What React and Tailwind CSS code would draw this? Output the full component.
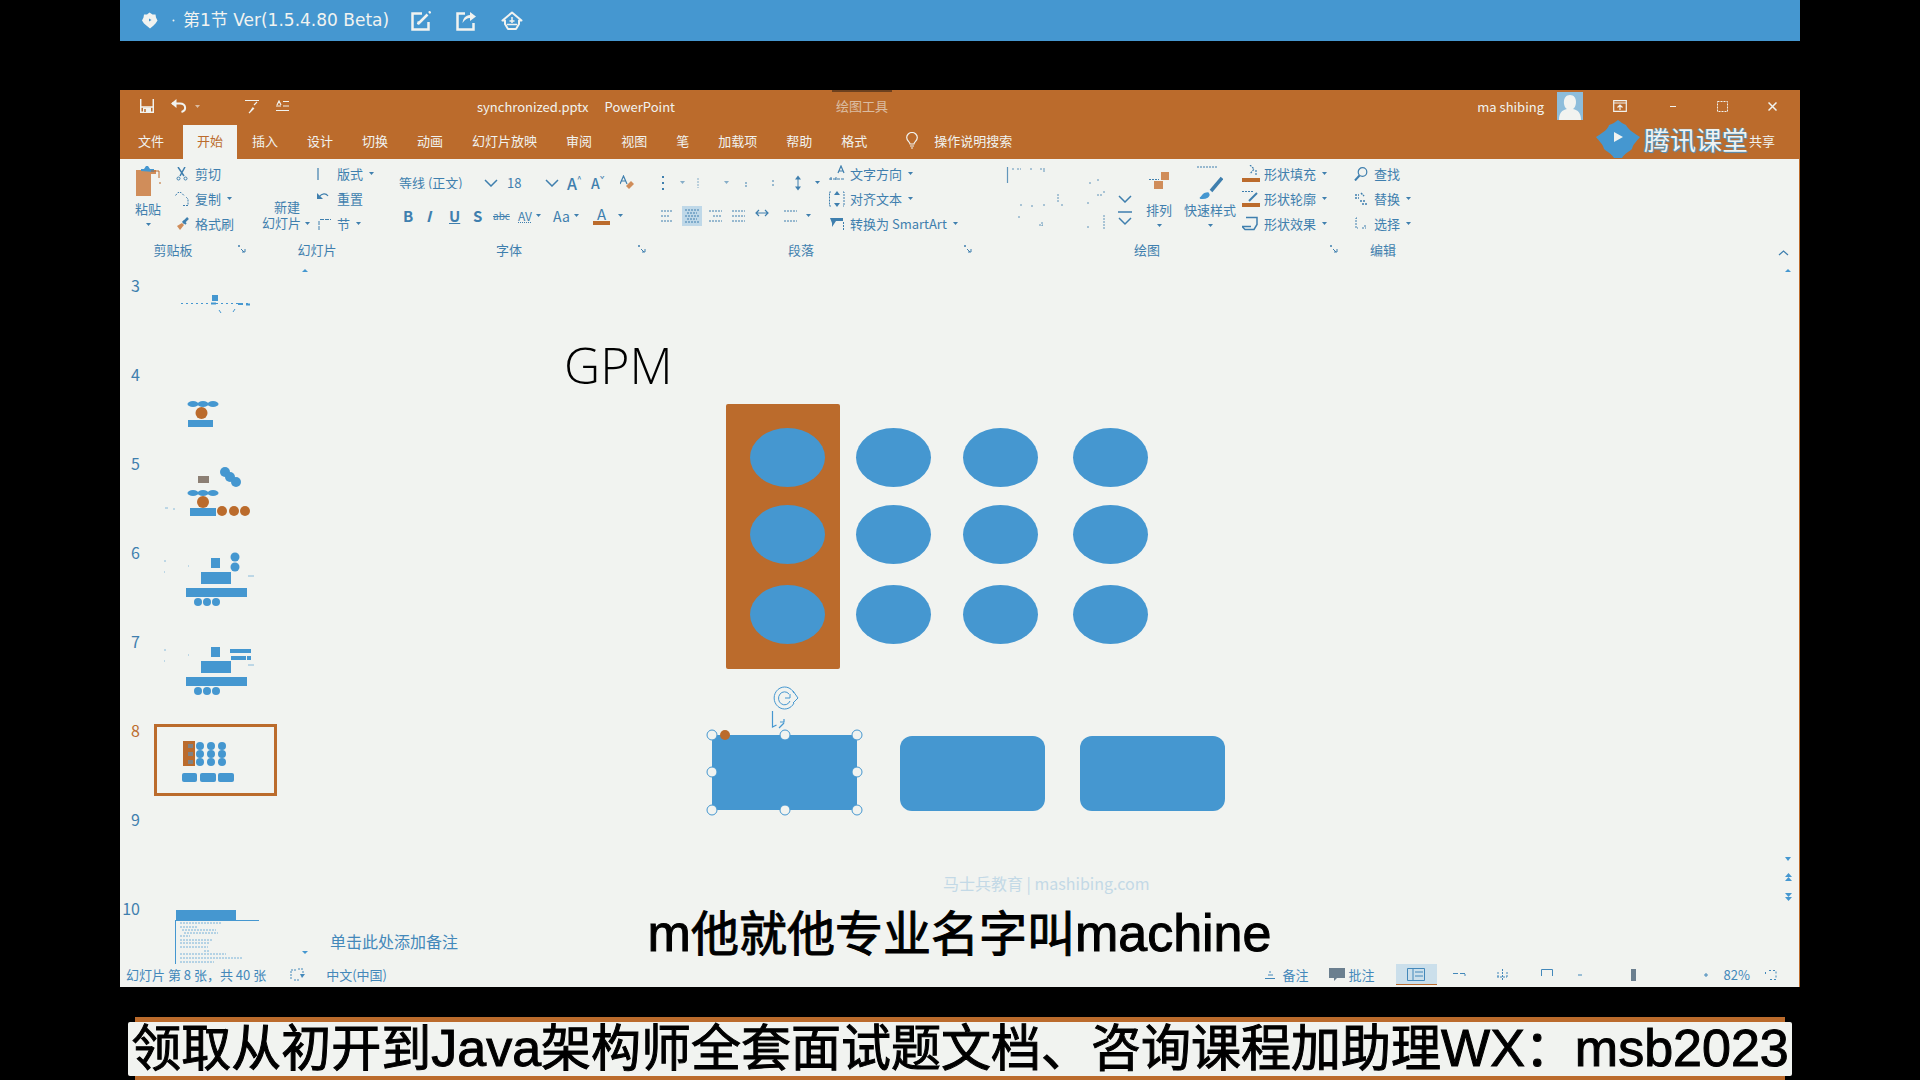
import React from "react";

const CJK = "font-['Noto_Sans_CJK_SC',sans-serif]";

function Ic({ w = 16, h = 16, className = "", children }) {
  return (
    <svg
      width={w}
      height={h}
      viewBox={`0 0 ${w} ${h}`}
      fill="none"
      stroke="currentColor"
      strokeWidth="1.5"
      className={`shrink-0 ${className}`}
      aria-hidden="true"
    >
      {children}
    </svg>
  );
}

const Arrow = ({ className = "" }) => (
  <Ic w={5} h={3} className={className}>
    <path d="M0 0h5L2.5 3z" fill="currentColor" stroke="none" />
  </Ic>
);

const Chevron = ({ className = "" }) => (
  <Ic w={14} h={8} className={className}>
    <path d="M1 1l6 6 6-6" />
  </Ic>
);

const Launcher = () => (
  <Ic w={8} h={8}>
    <path d="M0 1h2M1 0v2M3 4l3 3M7 4v3H4" strokeWidth="1" />
  </Ic>
);

function TopBar() {
  return (
    <header className="flex h-[41px] items-center bg-[#4597d0] pl-[21px] text-[#f1f3f0]">
      <Ic w={17} h={17}>
        <path
          d="M8.500 0.500l3 2h3l.5 3 1.500 3-2 3-2.500 2.500-3 2.500-3-2.500-3-2.500-2-3 1.500-3 .5-3h3z"
          fill="currentColor"
          stroke="none"
        />
        <path d="M8 6.500l2.500 1.500L8 9.500z" fill="#4597d0" stroke="none" />
      </Ic>
      <Ic w={3} h={3} className="mr-[8px] ml-[14px]">
        <circle cx="1.500" cy="1.500" r="1" fill="currentColor" stroke="none" />
      </Ic>
      <h1 className="font-['DejaVu_Sans','Noto_Sans_CJK_SC',sans-serif] text-[17px] leading-none">第1节 Ver(1.5.4.80 Beta)</h1>
      <div className="ml-[22px] flex items-center gap-[25px]">
        <button aria-label="编辑">
          <Ic w={20} h={20}>
            <path d="M11 2.500H1.500v16h16V11" strokeWidth="2.500" />
            <path d="M8 12l8.500-8.500M18 2l1.500-1.500M7 13.500l1-3" strokeWidth="2.500" />
          </Ic>
        </button>
        <button aria-label="分享">
          <Ic w={20} h={20}>
            <path d="M9 2.500H1.500v16h16V12" strokeWidth="2.500" />
            <path d="M6.500 12C7 7 9.500 4.500 14 4V1l6 4.500L14 10V7c-3 0-5 1.500-7.500 5z" fill="currentColor" stroke="none" />
          </Ic>
        </button>
        <button aria-label="主页">
          <Ic w={22} h={20}>
            <path d="M11 1.500L1.500 9.500H4v3.500l3 5h8l3-5V9.500h2.500z" strokeWidth="2" strokeLinejoin="round" />
            <path d="M11 6v6M8.500 10h5M6 13.500h10" strokeWidth="1.500" />
          </Ic>
        </button>
      </div>
    </header>
  );
}

function TitleBar() {
  return (
    <div className="flex h-[34px] items-center pb-[2px] pl-5 text-[13px] leading-none">
      <div className="flex items-center">
        <button aria-label="保存">
          <Ic w={14} h={14}>
            <path d="M.7 0v13.300h12.600V0M1 8h12" />
            <path d="M3 8.500h8V13H3z" fill="currentColor" stroke="none" />
            <path d="M5 10v3" stroke="#bb6b2c" />
          </Ic>
        </button>
        <button aria-label="撤消" className="ml-[17px]">
          <Ic w={16} h={14}>
            <path d="M1 4.500h8c6 0 7 7 1.500 8.500" strokeWidth="2" />
            <path d="M0 4.500L5.500 0v9z" fill="currentColor" stroke="none" />
          </Ic>
        </button>
        <Arrow className="ml-2 opacity-60" />
        <button aria-label="从头开始" className="ml-[45px]">
          <Ic w={14} h={15}>
            <path d="M0 1.500h14M9 6l3-3M4 14l5-5M8 8.500L5 13" strokeWidth="1.200" />
          </Ic>
        </button>
        <button aria-label="选项" className="ml-[17px]">
          <Ic w={13} h={13}>
            <path d="M0 6h5M1 5l2-4 2 4M7 1.500h6M7 6h6M0 10.500h13" strokeWidth="1.200" />
          </Ic>
        </button>
      </div>
      <p className="ml-[188px]">synchronized.pptx</p>
      <p className="ml-[16px]">PowerPoint</p>
      <p className="ml-[157px] self-stretch border-t-2 border-[#3a2415] px-1 pt-[7px] opacity-60">绘图工具</p>
      <div className="ml-auto flex items-center">
        <span>ma shibing</span>
        <Ic w={26} h={28} className="ml-[13px]">
          <path d="M0 0h26v28H0z" fill="#8dbddb" stroke="none" />
          <path d="M13 3c8 0 7 12 3 14 5 1 8 4 8 11H2c0-7 3-10 8-11C6 15 5 3 13 3z" fill="#f1f3f0" stroke="none" />
        </Ic>
        <button aria-label="功能区显示选项" className="ml-[30px]">
          <Ic w={14} h={12}>
            <path d="M.7.7h12.600v10.600H.7zM1 3h12M7 10V5M4.500 7.500L7 5l2.500 2.500" strokeWidth="1.200" />
          </Ic>
        </button>
        <button aria-label="最小化" className="ml-[43px]">
          <Ic w={6} h={12}>
            <path d="M0 6.500h6" strokeWidth="1" />
          </Ic>
        </button>
        <button aria-label="还原" className="ml-[41px]">
          <Ic w={11} h={11}>
            <path d="M.5.5h10v10H.5z" strokeWidth="1" strokeDasharray="2 1" />
          </Ic>
        </button>
        <button aria-label="关闭" className="mr-[22px] ml-[40px]">
          <Ic w={9} h={9}>
            <path d="M.5.5l8 8M8.500.5l-8 8" />
          </Ic>
        </button>
      </div>
    </div>
  );
}

const TABS = ["插入", "设计", "切换", "动画", "幻灯片放映", "审阅", "视图", "笔", "加载项", "帮助", "格式"];

function TabBar() {
  return (
    <nav className="relative flex h-[35px] items-stretch gap-px pl-1 text-[13px] leading-none">
      <button className="mr-[4px] px-[14px] pb-[3px]">文件</button>
      <button className="mt-px bg-[#f1f3f0] px-[14px] pb-[3px] text-[#bb6b2c]">开始</button>
      {TABS.map((t) => (
        <button key={t} className="px-[14px] pb-[3px]">
          {t}
        </button>
      ))}
      <button className="ml-[24px] flex items-center gap-4 pb-[3px]">
        <Ic w={12} h={17}>
          <path d="M4 12c0-2-3.300-3-3.300-6.500a5.300 5 0 0 1 10.600 0C11.300 9 8 10 8 12zM4 14h4M5 16h2" strokeWidth="1.200" />
        </Ic>
        操作说明搜索
      </button>
      <button className="mr-[24px] ml-auto pb-[3px]">共享</button>
      <div className="absolute -top-1 right-[51px] flex items-center gap-1">
        <Ic w={44} h={38}>
          <path
            d="M22 0c3 2 5 4 8 5 2 4 6 7 14 12-3 4-7 7-8 12-3 3-7 4-10 9h-8c-3-5-7-6-10-9-1-5-5-8-8-12C8 12 12 9 13 5c4-1 6-3 9-5z"
            fill="#4597d0"
            stroke="none"
          />
          <path d="M18 12l9 5-9 5z" fill="#f1f3f0" stroke="none" />
        </Ic>
        <span className="text-[26px] leading-none [text-shadow:1px_1px_1px_#4597d0,-1px_0_1px_#4597d0]">腾讯课堂</span>
      </div>
    </nav>
  );
}

function Group({ label, width, launcher, children }) {
  return (
    <section className={`flex shrink-0 flex-col ${width}`}>
      <div className="flex h-[80px] pt-0.5">{children}</div>
      <div className="flex h-[20px] items-center pr-1">
        <h2 className={`flex-1 text-center ${launcher ? "pr-3" : "pr-1"}`}>{label}</h2>
        {launcher && <Launcher />}
      </div>
    </section>
  );
}

function Row({ icon, text, arrow }) {
  return (
    <button className="flex h-[25px] items-center gap-[5px] whitespace-nowrap">
      <span className="flex w-4 justify-center">{icon}</span>
      {text}
      {arrow && <Arrow className="ml-px" />}
    </button>
  );
}

const Shape = ({ d, children }) => (
  <Ic w={18} h={18}>
    {d && <path d={d} />}
    {children}
  </Ic>
);

const Lines = ({ d = "M0 2h12M0 7h9M0 12h12", className = "" }) => (
  <Ic w={14} h={14} className={className}>
    <path d={d} strokeWidth="1" strokeDasharray="2 1" />
  </Ic>
);

function Ribbon() {
  return (
    <div className="flex h-[107px] overflow-hidden text-[13px] leading-none text-[#3f7fae]">
      <Group label="剪贴板" width="w-[130px]" launcher>
        <button className="ml-3 flex w-8 flex-col items-center pt-[5px]">
          <Ic w={26} h={32}>
            <path d="M1 4h20v4h-5v22H1z" fill="#d08d5a" stroke="none" />
            <path d="M6 5V3h3l2-3h2l2 3h4v3z" fill="#4597d0" stroke="none" />
            <path d="M16 5h8v7M24 17h3" strokeWidth="1" stroke="#bb6b2c" />
          </Ic>
          <span className="mt-1">粘贴</span>
          <Arrow className="mt-2" />
        </button>
        <div className="ml-[10px] flex flex-col">
          <Row
            text="剪切"
            icon={
              <Ic w={12} h={14}>
                <path d="M2 0l6 9M9 0L4 9" />
                <circle cx="2.500" cy="11.500" r="1.500" strokeWidth="1" />
                <circle cx="9.500" cy="11.500" r="1.500" strokeWidth="1" />
              </Ic>
            }
          />
          <Row
            text="复制"
            arrow
            icon={
              <Ic w={14} h={14}>
                <path d="M.5 3.500L3 .5h3l3 3M8 13.500h5V7l-2-2" strokeWidth="1" strokeDasharray="2 1" />
              </Ic>
            }
          />
          <Row
            text="格式刷"
            icon={
              <Ic w={13} h={13}>
                <path d="M12 1L7 6" strokeWidth="2.500" />
                <path d="M7 4l3 3" strokeWidth="2" />
                <path d="M6 6l-5 3 3 4 4-5z" fill="#d08d5a" stroke="none" />
              </Ic>
            }
          />
        </div>
      </Group>

      <Group label="幻灯片" width="w-[142px]">
        <button className="ml-3 flex w-[50px] flex-col items-start pt-[38px]">
          <span className="ml-3 leading-[16px]">新建</span>
          <span className="flex items-center gap-1 leading-[16px]">
            幻灯片 <Arrow />
          </span>
        </button>
        <div className="ml-1 flex flex-col">
          <Row
            text="版式"
            arrow
            icon={
              <Ic w={14} h={14}>
                <path d="M1 1v12" strokeWidth="1.200" />
              </Ic>
            }
          />
          <Row
            text="重置"
            icon={
              <Ic w={14} h={14}>
                <path d="M2 5c3-4 7-4 9-1" strokeWidth="1.200" />
                <path d="M0 1v6h6z" fill="currentColor" stroke="none" />
              </Ic>
            }
          />
          <Row
            text="节"
            arrow
            icon={
              <Ic w={14} h={14}>
                <path d="M2 13V4M3 2.500h11" strokeWidth="1" strokeDasharray="4 1" />
              </Ic>
            }
          />
        </div>
      </Group>

      <Group label="字体" width="w-[258px]" launcher>
        <div className="ml-[7px] flex flex-col pt-[5px]">
          <div className="flex h-[33px] items-center">
            <label className="relative flex items-center">
              <select aria-label="字体" className="w-[108px] appearance-none bg-transparent">
                <option>等线 (正文)</option>
              </select>
              <Chevron className="pointer-events-none absolute right-[9px]" />
            </label>
            <label className="relative flex items-center">
              <select aria-label="字号" className="w-[60px] appearance-none bg-transparent">
                <option>18</option>
              </select>
              <Chevron className="pointer-events-none absolute right-[8px]" />
            </label>
            <button className="flex w-[24px] items-start text-base leading-none font-medium">
              A<span className="text-[8px]">^</span>
            </button>
            <button className="flex w-[29px] items-start text-sm leading-none font-medium">
              A<span className="text-[8px]">ˇ</span>
            </button>
            <button className="flex items-center" aria-label="清除格式">
              <Ic w={14} h={16}>
                <path d="M0 9l3.500-8L7 9M1.500 6H6" strokeWidth="1.200" />
                <path d="M6 11l5-5 3 3-5 5z" fill="#d08d5a" stroke="none" />
              </Ic>
            </button>
          </div>
          <div className="flex h-[33px] items-center text-[15px] leading-none">
            <button className="w-[23px] pl-1 text-left font-bold">B</button>
            <button className="w-[23px] pl-1 text-left font-bold italic">I</button>
            <button className="w-[24px] pl-1 text-left font-bold underline">U</button>
            <button className="w-[24px] pl-1 text-left font-bold">S</button>
            <button className="w-[25px] text-left text-[10px] line-through">abc</button>
            <button className="w-[35px] text-left">
              <span className="flex items-center gap-1 text-[12px] underline decoration-dotted">
                AV <Arrow />
              </span>
            </button>
            <button className="flex w-[40px] items-center gap-1 text-[14px]">
              Aa <Arrow />
            </button>
            <button className="flex items-center gap-2">
              <span className="w-[17px] border-b-4 border-[#bb6b2c] text-center">A</span>
              <Arrow />
            </button>
          </div>
        </div>
      </Group>

      <Group label="段落" width="w-[326px]" launcher>
        <div className="ml-[11px] flex w-[167px] flex-col pt-[5px]">
          <div className="flex h-[33px] items-center justify-between pr-[8px]">
            <Ic w={6} h={16}>
              <path d="M1 2h2M1 8h2M1 14h2" strokeWidth="2" />
            </Ic>
            <Arrow className="opacity-60" />
            <Lines d="M1 2v10" className="opacity-60" />
            <Arrow className="opacity-60" />
            <Lines d="M4 7h3M4 10h2" />
            <Lines d="M4 5h3M4 9h3" />
            <Ic w={8} h={16}>
              <path d="M4 2v12" strokeWidth="1" />
              <path d="M1 4.500L4 .5l3 4zM1 11.500l3 4 3-4z" fill="currentColor" stroke="none" />
            </Ic>
            <Arrow />
          </div>
          <div className="flex h-[33px] items-center">
            <button aria-label="左对齐"><Lines /></button>
            <button aria-label="居中" className="ml-[7px] bg-[#bfd8e8] p-[3px]"><Lines d="M0 1h14M2 4h10M0 7h14M2 10h10M0 13h14" /></button>
            <button aria-label="右对齐" className="ml-[7px]"><Lines d="M0 2h13M4 7h9M0 12h13" /></button>
            <button aria-label="两端对齐" className="ml-[9px]"><Lines d="M0 2h13M0 7h13M0 12h13" /></button>
            <button aria-label="分散对齐" className="ml-[9px]">
              <Ic w={14} h={14}>
                <path d="M1 4h12M4 1L1 4l3 3M10 1l3 3-3 3" strokeWidth="1.200" />
              </Ic>
            </button>
            <button aria-label="分栏" className="ml-[15px] flex items-center gap-2">
              <Lines d="M0 2h13M0 12h13" />
              <Arrow />
            </button>
          </div>
        </div>
        <div className="flex flex-col pl-[1px]">
          <Row
            text="文字方向"
            arrow
            icon={
              <Ic w={16} h={18}>
                <path d="M9 8l3-7 3 7M10 6h4" strokeWidth="1.200" />
                <path d="M0 14h15M2 12v4M7 12v4" strokeWidth="1" strokeDasharray="3 1" />
              </Ic>
            }
          />
          <Row
            text="对齐文本"
            arrow
            icon={
              <Ic w={16} h={16}>
                <path d="M2 1H.5v14H2M14 1h1v14h-1" strokeWidth="1" strokeDasharray="2 1" />
                <path d="M5 4l3-4 3 4zM5 12l3 4 3-4z" fill="currentColor" stroke="none" />
              </Ic>
            }
          />
          <Row
            text="转换为 SmartArt"
            arrow
            icon={
              <Ic w={16} h={14}>
                <path d="M1 1h13v3H7l-4 6V6z" fill="currentColor" stroke="none" />
                <path d="M14.500 5v8" strokeWidth="1" strokeDasharray="2 1" />
              </Ic>
            }
          />
        </div>
      </Group>

      <Group label="绘图" width="w-[366px]" launcher>
        <Ic w={106} h={70} className="ml-[29px] opacity-80">
          <path d="M2.500 6v16" strokeWidth="1.200" />
          <path
            d="M7 8h3M12 8h4M25 8h2M35 8h5M38 10h3M84 22h3M92 19h2M53 33v9M56 44h3M15 44h2M26 45h2M38 44h2M13 56h2M34 64h4M37 61v4M82 42h3M92 34h6M99 30v3M99 54v14M82 66h2"
            strokeWidth="1"
            strokeDasharray="2 1"
          />
        </Ic>
        <div className="ml-[6px] flex w-[16px] flex-col items-center gap-[7px] pt-[34px]">
          <button aria-label="向下滚动"><Chevron className="block" /></button>
          <button aria-label="其他形状">
            <Ic w={14} h={16} className="block">
              <path d="M0 2h14M1 8l6 6 6-6" />
            </Ic>
          </button>
        </div>
        <button className="ml-[12px] flex w-[28px] flex-col items-center pt-[11px]">
          <Ic w={20} h={18}>
            <path d="M12 0h8v8h-8zM5 9h9v8H5z" fill="#d08d5a" stroke="none" />
            <path d="M0 7.500h10" strokeWidth="1" strokeDasharray="2 1" />
          </Ic>
          <span className="mt-[13px]">排列</span>
          <Arrow className="mt-2" />
        </button>
        <button className="ml-[10px] flex w-[54px] flex-col items-center pt-[5px]">
          <Ic w={26} h={33}>
            <path d="M0 1h20" strokeWidth="1" strokeDasharray="2 1" />
            <path d="M25 12L14 25" strokeWidth="3.500" />
            <path d="M3 32c3-1 2-5 8-5 3 3-2 6-8 5z" fill="#4597d0" stroke="#4597d0" />
          </Ic>
          <span className="mt-1">快速样式</span>
          <Arrow className="mt-2" />
        </button>
        <div className="ml-[6px] flex flex-col">
          <Row
            text="形状填充"
            arrow
            icon={
              <Shape>
                <path d="M8 0l4 4-4 5M14 5v5" strokeWidth="1.200" strokeDasharray="2 1" />
                <path d="M0 13h18v4H0z" fill="#bb6b2c" stroke="none" />
              </Shape>
            }
          />
          <Row
            text="形状轮廓"
            arrow
            icon={
              <Shape>
                <path d="M0 1.500h12" strokeWidth="1" strokeDasharray="2 1" />
                <path d="M15 3L7 11" strokeWidth="2" />
                <path d="M0 13h18v4H0z" fill="#bb6b2c" stroke="none" />
              </Shape>
            }
          />
          <Row text="形状效果" arrow icon={<Shape d="M4 2.500h11v7l-3 5H3l-3-3h9" />} />
        </div>
      </Group>

      <Group label="编辑" width="w-[90px]">
        <div className="ml-[11px] flex flex-col">
          <Row
            text="查找"
            icon={
              <Ic w={14} h={14}>
                <circle cx="8.500" cy="5" r="4.300" strokeWidth="1.200" />
                <path d="M5.500 8.500L1 13.500" strokeWidth="2" />
              </Ic>
            }
          />
          <Row
            text="替换"
            arrow
            icon={
              <Ic w={14} h={14}>
                <path d="M1 3h4M1 6h4M7 1l3 3M6 9h6M8 12h6" strokeWidth="1.500" strokeDasharray="2 1" />
              </Ic>
            }
          />
          <Row
            text="选择"
            arrow
            icon={
              <Ic w={14} h={14}>
                <path d="M3 1H2v10h2M8 11h4M11 8v3" strokeWidth="1" strokeDasharray="2 1" />
              </Ic>
            }
          />
        </div>
      </Group>
      <button aria-label="折叠功能区" className="mr-[10px] mb-[10px] ml-auto self-end">
        <Ic w={11} h={6}>
          <path d="M1 5l4.500-4L10 5" strokeWidth="1.200" />
        </Ic>
      </button>
    </div>
  );
}

const B = "#4597d0";
const O = "#bb6b2c";

function Dots({ pts, r = 4, fill = B }) {
  return pts.map(([x, y]) => <circle key={`${x}-${y}`} cx={x} cy={y} r={r} fill={fill} />);
}

function Flow() {
  return (
    <>
      <path d="M47 26h30v12H47zM32 42h61v9H32zM57 12h9v10h-9z" fill={B} />
      <Dots pts={[[44, 56], [53, 56], [62, 56]]} />
      <path d="M10 15h2M10 26h1M34 20h1M94 30h6" stroke={B} opacity=".6" />
    </>
  );
}

function Trio() {
  return (
    <>
      <ellipse cx="39" cy="36" rx="5.500" ry="3" fill={B} />
      <ellipse cx="49" cy="36" rx="5.500" ry="3" fill={B} />
      <ellipse cx="59" cy="36" rx="5.500" ry="3" fill={B} />
    </>
  );
}

const THUMBS = {
  3: (
    <>
      <path d="M58 16h6v6h-6z" fill={B} />
      <path d="M27 24.500h69" stroke={B} strokeDasharray="2 3" />
      <path d="M57 24.500h5M84 25h5M92 25.500h4" stroke={B} strokeWidth="2" />
      <path d="M65 31l2 3M79 33l2-3" stroke={B} />
    </>
  ),
  4: (
    <>
      <Trio />
      <path d="M34 52h25v7H34z" fill={B} />
      <circle cx="47.500" cy="45" r="6" fill={O} />
    </>
  ),
  5: (
    <>
      <Dots r={5} pts={[[71, 15], [76, 20], [82, 25]]} />
      <path d="M44 19h11v7H44z" fill="#8c7f74" />
      <Trio />
      <path d="M36 51h26v8H36z" fill={B} />
      <circle cx="49" cy="45" r="6" fill={O} />
      <Dots r={5} fill={O} pts={[[68, 54], [80, 54], [91, 54]]} />
      <path d="M11 51h3M19 52h2" stroke={B} opacity=".6" />
    </>
  ),
  6: (
    <>
      <Flow />
      <Dots r={4.5} pts={[[81, 11], [81, 21]]} />
    </>
  ),
  7: (
    <>
      <Flow />
      <path d="M76 14h21v4H76zM77 21h15v4H77zM93 21h4v4h-4z" fill={B} />
    </>
  ),
  8: (
    <>
      <path d="M29 17h12v25H29z" fill={O} />
      <path d="M34 20h5v4h-5zM34 28h5v4h-5zM34 36h5v4h-5z" fill="#7f8285" />
      <Dots pts={[[46, 22], [57, 22], [68, 22], [46, 30], [57, 30], [68, 30], [46, 38], [57, 38], [68, 38]]} />
      <rect x="28" y="49" width="15" height="9" rx="2" fill={B} />
      <rect x="46" y="49" width="16" height="9" rx="2" fill={B} />
      <rect x="64" y="49" width="16" height="9" rx="2" fill={B} />
    </>
  ),
  9: null,
  10: (
    <>
      <path d="M22 8h60v10H22z" fill={B} />
      <path d="M22 18.500h83M21.500 18v46" stroke={B} />
      <path
        d="M26 21h41M26 25h18M28 28h34M30 31h34M26 34h10M26 38h32M26 41h30M26 45h28M50 49h6M26 52h46M26 56h62M26 60h34"
        stroke={B}
        strokeDasharray="2 1"
        opacity=".7"
      />
    </>
  ),
};

function SlidePanel() {
  return (
    <aside className="relative w-[190px] shrink-0 overflow-hidden">
      <ol className="absolute inset-x-0 top-[13px]">
        {Object.keys(THUMBS).map((n) => (
          <li key={n} className="flex h-[89px] items-start">
            <span
              className={`flex w-[20px] justify-end text-base leading-[12px] whitespace-nowrap ${n === "8" ? "text-[#bb6b2c]" : "text-[#3f7fae]"}`}
            >
              {n}
            </span>
            <button
              aria-label={`幻灯片 ${n}`}
              className={`ml-[14px] h-[72px] w-[123px] ${n === "8" ? "outline-3 -outline-offset-3 outline-[#bb6b2c]" : ""}`}
            >
              <svg width="123" height="72" viewBox="0 0 123 72" fill="none" aria-hidden="true">
                {THUMBS[n]}
              </svg>
            </button>
          </li>
        ))}
      </ol>
      <Ic w={6} h={3} className="absolute top-[3px] right-[2px] text-[#4597d0]">
        <path d="M3 0l3 3H0z" fill="currentColor" stroke="none" />
      </Ic>
      <Ic w={6} h={3} className="absolute right-[2px] bottom-[10px] text-[#4597d0]">
        <path d="M3 3l3-3H0z" fill="currentColor" stroke="none" />
      </Ic>
    </aside>
  );
}

const COLS = [440, 546, 653, 763];
const ROWS = [162, 239, 319];
const HANDLES = [
  [402, 469], [475, 469], [547, 469],
  [402, 506], [547, 506],
  [402, 544], [475, 544], [547, 544],
];

function Slide() {
  return (
    <main className="relative min-h-0 flex-1">
      <h2 className="absolute top-[69px] left-[254px] font-['Open_Sans','Noto_Sans',sans-serif] text-[50px] leading-[60px] font-light text-black">
        GPM
      </h2>
      <div className="absolute top-[138px] left-[416px] h-[265px] w-[114px] rounded-xs bg-[#bb6b2c]" />
      {ROWS.map((y) =>
        COLS.map((x) => (
          <div
            key={`${x}-${y}`}
            className="absolute h-[59px] w-[75px] rounded-[50%] bg-[#4597d0]"
            style={{ left: x, top: y }}
          />
        )),
      )}
      <div className="absolute top-[469px] left-[402px] h-[75px] w-[145px] rounded-md bg-[#4597d0]" />
      <div className="absolute top-[470px] left-[590px] h-[75px] w-[145px] rounded-xl bg-[#4597d0]" />
      <div className="absolute top-[470px] left-[770px] h-[75px] w-[145px] rounded-xl bg-[#4597d0]" />
      {HANDLES.map(([x, y]) => (
        <span
          key={`${x}-${y}`}
          className="absolute size-[11px] -translate-1/2 rounded-full border border-[#4597d0] bg-[#f1f3f0]"
          style={{ left: x, top: y }}
        />
      ))}
      <span className="absolute top-[464px] left-[410px] size-[10px] rounded-full bg-[#bb6b2c]" />
      <Ic w={26} h={24} className="absolute top-[420px] left-[463px] text-[#4597d0]">
        <path d="M21 7A10.500 11 0 1 0 21 17M20 5l5 7-5 5" strokeWidth="1" />
        <path d="M16 8a6 6.500 0 1 0 1 7M12 12h5V8" strokeWidth="1" />
      </Ic>
      <Ic w={16} h={20} className="absolute top-[445px] left-[461px] text-[#4597d0]">
        <path d="M1.500 0v16l4-2M9 11h4V8M8 17l5-5" strokeWidth="1.200" />
      </Ic>
      <p className="absolute top-[609px] left-[633px] text-base leading-none whitespace-nowrap text-[#c3d9e6]">
        马士兵教育 | mashibing.com
      </p>
      <div className="absolute top-[3px] right-[7px] bottom-0 flex w-[8px] flex-col items-center text-[#4597d0]">
        <Ic w={6} h={3}>
          <path d="M3 0l3 3H0z" fill="currentColor" stroke="none" />
        </Ic>
        <Ic w={6} h={4} className="mt-auto">
          <path d="M3 4L0 0h6z" fill="currentColor" stroke="none" />
        </Ic>
        <Ic w={7} h={9} className="mt-[12px]">
          <path d="M3.500 0L7 4H0zM3.500 4L7 8H0z" fill="currentColor" stroke="none" />
        </Ic>
        <Ic w={7} h={9} className="mt-[10px] mb-[10px]">
          <path d="M3.500 5L0 1h7zM3.500 9L0 5h7z" fill="currentColor" stroke="none" />
        </Ic>
      </div>
    </main>
  );
}

function StatusBar() {
  return (
    <footer className="flex h-[23px] items-center pb-[2px] pl-[6px] text-[13px] leading-none text-[#4388ba]">
      <span>幻灯片 第 8 张，共 40 张</span>
      <Ic w={16} h={13} className="ml-[24px]">
        <path d="M1 2h5M8 1h5M1 3v8M4 12h6M13 3v2" strokeWidth="1" strokeDasharray="2 1" />
        <path d="M10 6h5l-3 4z" fill="currentColor" stroke="none" />
      </Ic>
      <span className="ml-[20px]">中文(中国)</span>
      <div className="mr-[22px] ml-auto flex items-center">
        <button className="flex items-center gap-2">
          <Ic w={10} h={9}>
            <path d="M0 8.500h10M3 5h5M5 1v2" strokeWidth="1" />
          </Ic>
          备注
        </button>
        <button className="ml-[20px] flex items-center gap-1">
          <Ic w={16} h={13}>
            <path d="M0 0h16v10H8l-3 3v-3H0z" fill="#6b7f8f" stroke="none" />
          </Ic>
          批注
        </button>
        <button aria-label="普通视图" className="ml-[21px] flex h-[21px] w-[41px] items-center justify-center border-b border-[#bb6b2c] bg-[#cbdfeb]">
          <Ic w={18} h={13}>
            <path d="M.5.5h17v12H.5zM6 1v11M8 4h8M8 8h8" strokeWidth="1" />
          </Ic>
        </button>
        <button aria-label="幻灯片浏览" className="ml-[16px]">
          <Ic w={13} h={10}>
            <path d="M0 3.500h5M7 3.500h5M12 4v2" strokeWidth="1" />
          </Ic>
        </button>
        <button aria-label="阅读视图" className="ml-[31px]">
          <Ic w={11} h={12}>
            <path d="M5.500 0v12M1 3v6M0 8h10M10 3v6" strokeWidth="1" strokeDasharray="2 1" />
          </Ic>
        </button>
        <button aria-label="幻灯片放映" className="ml-[33px]">
          <Ic w={12} h={14}>
            <path d="M.5 8V1.500h11V8" strokeWidth="1" />
          </Ic>
        </button>
        <button aria-label="缩小" className="ml-[25px]">
          <Ic w={4} h={4}>
            <path d="M0 2h4" strokeWidth="1" />
          </Ic>
        </button>
        <input
          type="range"
          aria-label="缩放"
          defaultValue="41"
          className="mx-[10px] h-[14px] w-[102px] appearance-none bg-transparent [&::-webkit-slider-thumb]:h-[12px] [&::-webkit-slider-thumb]:w-[5px] [&::-webkit-slider-thumb]:appearance-none [&::-webkit-slider-thumb]:bg-[#6b7f8f]"
        />
        <button aria-label="放大">
          <Ic w={4} h={4}>
            <path d="M0 2h4M2 0v4" strokeWidth="1" />
          </Ic>
        </button>
        <span className="ml-[16px]">82%</span>
        <button aria-label="适应窗口" className="ml-[15px]">
          <Ic w={12} h={12}>
            <path d="M.5 3v4M4 1.500h7v9H5" strokeWidth="1" strokeDasharray="2 2" />
          </Ic>
        </button>
      </div>
    </footer>
  );
}

const Latin = ({ children }) => <span className="text-[52px] leading-none">{children}</span>;

export default function App() {
  return (
    <div className={`flex min-h-screen flex-col bg-black px-[6.25%] ${CJK}`}>
      <TopBar />
      <div className="relative mt-[49px] flex flex-1 flex-col overflow-hidden border-r border-[#bb6b2c] bg-[#f1f3f0]">
        <div className="bg-[#bb6b2c] text-[#f1f3f0]">
          <TitleBar />
          <TabBar />
        </div>
        <Ribbon />
        <div className="flex min-h-0 flex-1">
          <SlidePanel />
          <div className="flex min-w-0 flex-1 flex-col">
            <Slide />
            <input
              aria-label="备注"
              placeholder="单击此处添加备注"
              className="mt-[12px] mb-[5px] h-[36px] bg-transparent pl-[20px] text-base outline-none placeholder:text-[#4388ba]"
            />
          </div>
        </div>
        <StatusBar />
        <p className="pointer-events-none absolute inset-x-0 bottom-[22px] text-center font-['Liberation_Sans','Noto_Sans_CJK_SC',sans-serif] text-[48px] leading-[60px] whitespace-nowrap text-black [-webkit-text-stroke:1px_black]">
          <Latin>m</Latin>他就他专业名字叫<Latin>machine</Latin>
        </p>
      </div>
      <div className="mx-[8px] mt-[30px] h-[63px] bg-[linear-gradient(#bb6b2c,#bb6b2c)] bg-[length:calc(100%-14px)_100%] bg-center bg-no-repeat pt-[5px]">
        <p className="h-[54px] rounded-xs bg-[#f1f3f0] text-center font-['Liberation_Sans','Noto_Sans_CJK_SC',sans-serif] text-[50px] leading-[54px] whitespace-nowrap text-black [-webkit-text-stroke:1px_black]">
          领取从初开到<Latin>Java</Latin>架构师全套面试题文档、咨询课程加助理<Latin>WX</Latin>：<Latin>msb2023</Latin>
        </p>
      </div>
    </div>
  );
}
